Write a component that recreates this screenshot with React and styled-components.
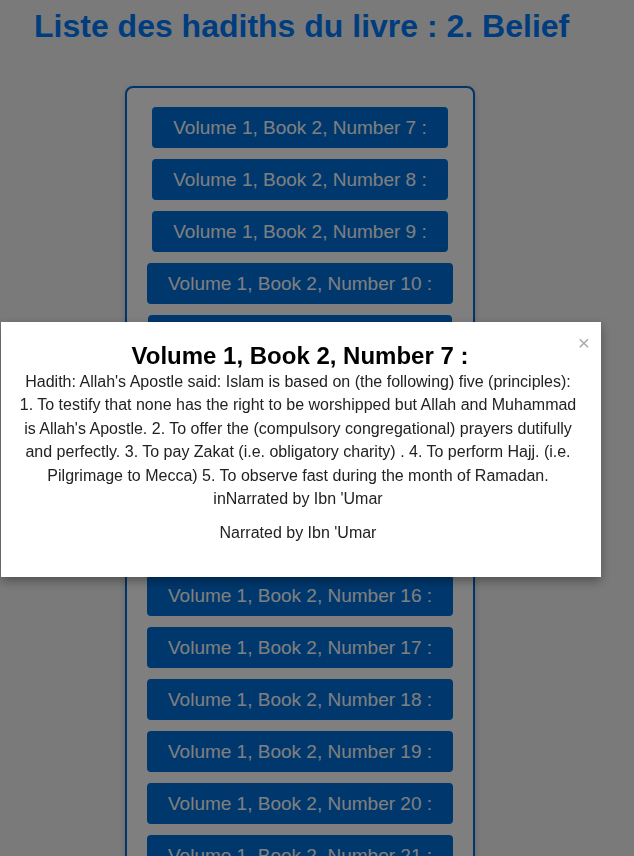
import styled, { createGlobalStyle } from 'styled-components';

const GlobalStyle = createGlobalStyle`
  body {
    margin: 0;
    background: #f5f5f5;
    font-family: "Liberation Sans", Arial, sans-serif;
  }
`;

const numbers = Array.from({ length: 16 }, (_, i) => i + 7);

const App = () => {
  return (
    <>
      <GlobalStyle />
      <Page>
        <Title>Liste des hadiths du livre : 2. Belief</Title>
        <ListBox>
          {numbers.map((n) => (
            <HadithButton key={n}>Volume 1, Book 2, Number {n} :</HadithButton>
          ))}
        </ListBox>
      </Page>
      <Overlay>
        <Modal>
          <Close>×</Close>
          <ModalTitle>Volume 1, Book 2, Number 7 :</ModalTitle>
          <ModalText>
            Hadith: Allah's Apostle said: Islam is based on (the following) five (principles): 1. To
            testify that none has the right to be worshipped but Allah and Muhammad is Allah's
            Apostle. 2. To offer the (compulsory congregational) prayers dutifully and perfectly. 3.
            To pay Zakat (i.e. obligatory charity) . 4. To perform Hajj. (i.e. Pilgrimage to Mecca)
            5. To observe fast during the month of Ramadan. inNarrated by Ibn 'Umar
          </ModalText>
          <Narrator>Narrated by Ibn 'Umar</Narrator>
        </Modal>
      </Overlay>
    </>
  );
};

export default App;

const Page = styled.div`
  padding: 7px 0 40px;
`;

const Title = styled.h1`
  margin: 0 0 41px 34px;
  font-family: "Liberation Sans", Arial, sans-serif;
  font-size: 32px;
  font-weight: 700;
  color: #007bff;
  line-height: 38px;
`;

const ListBox = styled.div`
  width: 346px;
  margin-left: 125px;
  padding: 19px 0;
  background: #fff;
  border: 2px solid #0069d9;
  border-radius: 8px;
  box-shadow: 0 2px 6px rgba(0, 0, 0, 0.15);
  display: flex;
  flex-direction: column;
  align-items: center;
  gap: 11px;
`;

const HadithButton = styled.button`
  background: #0070dc;
  color: #fff;
  border: none;
  border-radius: 4px;
  padding: 9px 21px;
  font-family: "Liberation Sans", Arial, sans-serif;
  font-size: 19px;
  line-height: 23px;
  cursor: pointer;
`;

const Overlay = styled.div`
  position: fixed;
  inset: 0;
  background: rgba(0, 0, 0, 0.5);
`;

const Modal = styled.div`
  position: absolute;
  top: 322px;
  left: 1px;
  width: 600px;
  height: 255px;
  box-sizing: border-box;
  padding: 19px 22px 20px 16px;
  background: #fff;
  box-shadow: 0 4px 10px rgba(0, 0, 0, 0.35);
  text-align: center;
  color: #222;
`;

const Close = styled.span`
  position: absolute;
  top: 9px;
  right: 11px;
  font-size: 21px;
  color: #aaa;
  cursor: pointer;
`;

const ModalTitle = styled.h2`
  margin: 0 0 0 4px;
  font-family: "Liberation Sans", Arial, sans-serif;
  font-size: 24px;
  line-height: 29px;
  color: #000;
`;

const ModalText = styled.p`
  margin: 0;
  font-family: "Liberation Sans", Arial, sans-serif;
  font-size: 16px;
  line-height: 23.4px;
`;

const Narrator = styled.p`
  margin: 11px 0 0;
  font-family: "Liberation Sans", Arial, sans-serif;
  font-size: 16px;
  line-height: 23px;
`;
